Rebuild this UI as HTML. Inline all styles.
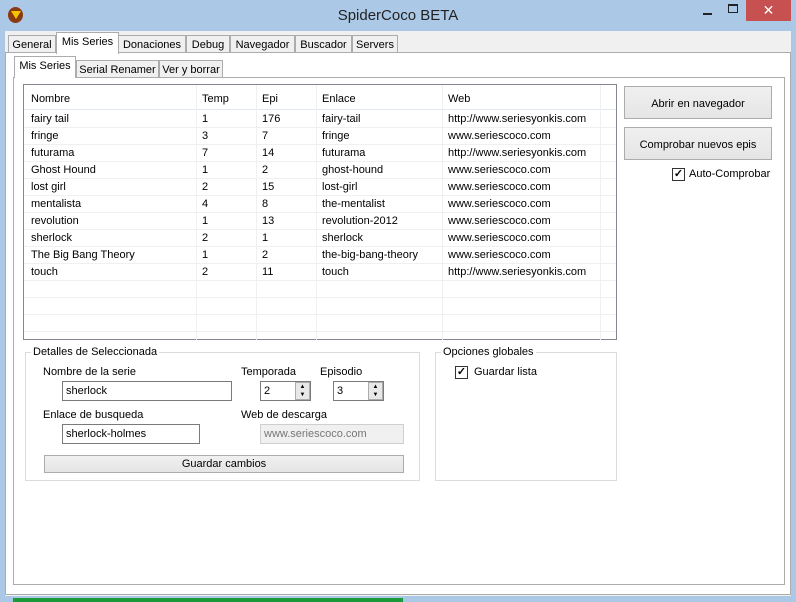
<!DOCTYPE html>
<html><head><meta charset="utf-8"><style>
*{box-sizing:border-box;margin:0;padding:0}
body{width:796px;height:602px;overflow:hidden;background:#abc9e6;font-family:"Liberation Sans",sans-serif;font-size:11px;color:#000;position:relative}
.a{position:absolute}
.t{position:absolute;white-space:nowrap}
.tab{position:absolute;background:#f0f0f0;border:1px solid #acacac;border-bottom:none;height:18px;padding-top:3px;text-align:center;font-size:11px}
.btn{position:absolute;background:linear-gradient(#f0f0f0,#e5e5e5);border:1px solid #acacac;text-align:center;font-size:11px}
.cb{position:absolute;width:13px;height:13px;border:1px solid #333;background:#fff;font-size:11px;line-height:11px;text-align:center;font-weight:bold}
.in{position:absolute;background:#fff;border:1px solid #7a7a7a;height:20px;padding:3px 0 0 3px;font-size:11px}
.row{position:absolute;left:24px;width:592px;height:17px;border-bottom:1px solid #f0f0f0}
.row span{position:absolute;top:2px}
.vl{position:absolute;top:84px;width:1px;height:255px;background:#f0f0f0}
</style></head><body>
<div class="a" style="left:0;top:0;width:796px;height:31px;background:#abc9e6"></div>
<div class="a" style="left:8px;top:7px;width:15px;height:16px;border-radius:50%;background:#8a3a10"></div>
<div class="a" style="left:11px;top:11px;width:0;height:0;border-left:5px solid transparent;border-right:5px solid transparent;border-top:8px solid #f5c400"></div>
<div class="t" style="left:0;width:796px;text-align:center;top:7px;font-size:15px;color:#222">SpiderCoco BETA</div>
<div class="a" style="left:703px;top:13px;width:9px;height:2px;background:#222"></div>
<div class="a" style="left:728px;top:4px;width:10px;height:9px;border:1px solid #222;border-top-width:2px"></div>
<div class="a" style="left:746px;top:0;width:45px;height:21px;background:#c75050;color:#fff;text-align:center;font-size:14px;line-height:20px">✕</div>
<div class="a" style="left:5px;top:31px;width:786px;height:565px;background:#f0f0f0"></div>
<div class="a" style="left:13px;top:598px;width:390px;height:4px;background:#1a9a3a"></div>
<!-- outer tabs -->
<div class="tab" style="left:8px;top:35px;width:48px">General</div>
<div class="tab" style="left:118px;top:35px;width:68px">Donaciones</div>
<div class="tab" style="left:186px;top:35px;width:44px">Debug</div>
<div class="tab" style="left:230px;top:35px;width:65px">Navegador</div>
<div class="tab" style="left:295px;top:35px;width:57px">Buscador</div>
<div class="tab" style="left:352px;top:35px;width:46px">Servers</div>
<div class="a" style="left:5px;top:52px;width:786px;height:543px;background:#fff;border:1px solid #acacac"></div>
<div class="tab" style="left:56px;top:32px;width:63px;height:22px;background:#fff;border-color:#acacac;z-index:2">Mis Series</div>
<!-- inner tabs -->
<div class="tab" style="left:76px;top:60px;width:83px">Serial Renamer</div>
<div class="tab" style="left:159px;top:60px;width:64px">Ver y borrar</div>
<div class="a" style="left:13px;top:77px;width:772px;height:508px;background:#fff;border:1px solid #acacac"></div>
<div class="tab" style="left:14px;top:56px;width:62px;height:22px;background:#fff;z-index:2">Mis Series</div>
<!-- table -->
<div class="a" style="left:23px;top:84px;width:594px;height:256px;border:1px solid #828790;background:#fff"></div>
<div class="a" style="left:24px;top:85px;width:592px;height:25px;background:#fff;border-bottom:1px solid #e0e8f4"></div>
<div class="vl" style="left:196px;top:85px"></div><div class="vl" style="left:256px;top:85px"></div><div class="vl" style="left:316px;top:85px"></div><div class="vl" style="left:442px;top:85px"></div><div class="vl" style="left:600px;top:85px"></div>
<div class="t" style="left:31px;top:93px">Nombre</div><div class="t" style="left:202px;top:93px">Temp</div><div class="t" style="left:262px;top:93px">Epi</div><div class="t" style="left:322px;top:93px">Enlace</div><div class="t" style="left:448px;top:93px">Web</div>
<div class="row" style="top:111px"><span style="left:7px">fairy tail</span><span style="left:178px">1</span><span style="left:238px">176</span><span style="left:298px">fairy-tail</span><span style="left:424px">http://www.seriesyonkis.com</span></div>
<div class="row" style="top:128px"><span style="left:7px">fringe</span><span style="left:178px">3</span><span style="left:238px">7</span><span style="left:298px">fringe</span><span style="left:424px">www.seriescoco.com</span></div>
<div class="row" style="top:145px"><span style="left:7px">futurama</span><span style="left:178px">7</span><span style="left:238px">14</span><span style="left:298px">futurama</span><span style="left:424px">http://www.seriesyonkis.com</span></div>
<div class="row" style="top:162px"><span style="left:7px">Ghost Hound</span><span style="left:178px">1</span><span style="left:238px">2</span><span style="left:298px">ghost-hound</span><span style="left:424px">www.seriescoco.com</span></div>
<div class="row" style="top:179px"><span style="left:7px">lost girl</span><span style="left:178px">2</span><span style="left:238px">15</span><span style="left:298px">lost-girl</span><span style="left:424px">www.seriescoco.com</span></div>
<div class="row" style="top:196px"><span style="left:7px">mentalista</span><span style="left:178px">4</span><span style="left:238px">8</span><span style="left:298px">the-mentalist</span><span style="left:424px">www.seriescoco.com</span></div>
<div class="row" style="top:213px"><span style="left:7px">revolution</span><span style="left:178px">1</span><span style="left:238px">13</span><span style="left:298px">revolution-2012</span><span style="left:424px">www.seriescoco.com</span></div>
<div class="row" style="top:230px"><span style="left:7px">sherlock</span><span style="left:178px">2</span><span style="left:238px">1</span><span style="left:298px">sherlock</span><span style="left:424px">www.seriescoco.com</span></div>
<div class="row" style="top:247px"><span style="left:7px">The Big Bang Theory</span><span style="left:178px">1</span><span style="left:238px">2</span><span style="left:298px">the-big-bang-theory</span><span style="left:424px">www.seriescoco.com</span></div>
<div class="row" style="top:264px"><span style="left:7px">touch</span><span style="left:178px">2</span><span style="left:238px">11</span><span style="left:298px">touch</span><span style="left:424px">http://www.seriesyonkis.com</span></div>
<div class="row" style="top:281px"></div><div class="row" style="top:298px"></div><div class="row" style="top:315px"></div>
<!-- buttons -->
<div class="btn" style="left:624px;top:86px;width:148px;height:33px;line-height:35px">Abrir en navegador</div>
<div class="btn" style="left:624px;top:127px;width:148px;height:33px;line-height:35px">Comprobar nuevos epis</div>
<div class="cb" style="left:672px;top:168px">✓</div>
<div class="t" style="left:689px;top:168px">Auto-Comprobar</div>
<!-- group 1 -->
<div class="a" style="left:25px;top:352px;width:395px;height:129px;border:1px solid #dcdcdc"></div>
<div class="t" style="left:31px;top:346px;background:#fff;padding:0 2px">Detalles de Seleccionada</div>
<div class="t" style="left:43px;top:366px">Nombre de la serie</div>
<div class="in" style="left:62px;top:381px;width:170px">sherlock</div>
<div class="t" style="left:241px;top:366px">Temporada</div>
<div class="t" style="left:320px;top:366px">Episodio</div>
<div class="in" style="left:260px;top:381px;width:51px">2</div>
<div class="a" style="left:295px;top:382px;width:15px;height:18px;background:#e8e8e8;border:1px solid #acacac;font-size:6px;line-height:8px;text-align:center">▲<br>▼</div>
<div class="in" style="left:333px;top:381px;width:51px">3</div>
<div class="a" style="left:368px;top:382px;width:15px;height:18px;background:#e8e8e8;border:1px solid #acacac;font-size:6px;line-height:8px;text-align:center">▲<br>▼</div>
<div class="t" style="left:43px;top:409px">Enlace de busqueda</div>
<div class="in" style="left:62px;top:424px;width:138px">sherlock-holmes</div>
<div class="t" style="left:241px;top:409px">Web de descarga</div>
<div class="in" style="left:260px;top:424px;width:144px;background:#f0f0f0;border-color:#cfcfcf;color:#777">www.seriescoco.com</div>
<div class="btn" style="left:44px;top:455px;width:360px;height:18px;line-height:17px">Guardar cambios</div>
<!-- group 2 -->
<div class="a" style="left:435px;top:352px;width:182px;height:129px;border:1px solid #dcdcdc"></div>
<div class="t" style="left:441px;top:346px;background:#fff;padding:0 2px">Opciones globales</div>
<div class="cb" style="left:455px;top:366px">✓</div>
<div class="t" style="left:474px;top:366px">Guardar lista</div>
</body></html>
